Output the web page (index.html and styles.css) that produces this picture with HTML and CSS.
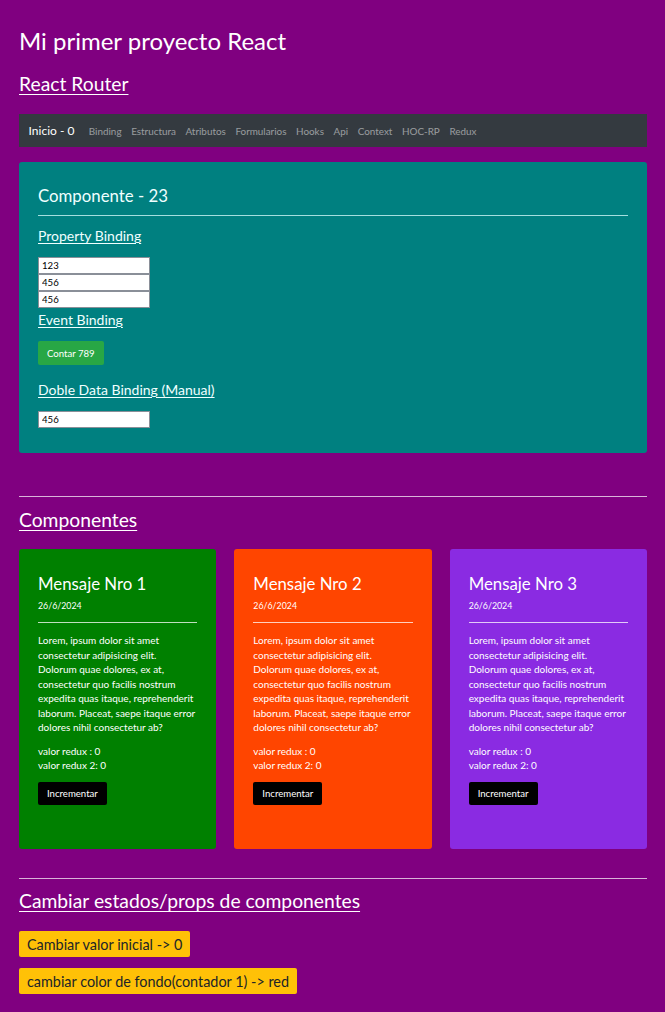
FILE: index.html
```html
<!DOCTYPE html>
<html lang="es">
<head>
<meta charset="utf-8">
<title>Mi primer proyecto React</title>
<link rel="stylesheet" href="styles.css">
</head>
<body>
<div class="page">
  <h1 class="title">Mi primer proyecto React</h1>
  <h2 class="section-link"><a href="#">React Router</a></h2>

  <nav class="navbar">
    <a class="brand" href="#">Inicio - 0</a>
    <a class="nav-link" href="#">Binding</a>
    <a class="nav-link" href="#">Estructura</a>
    <a class="nav-link" href="#">Atributos</a>
    <a class="nav-link" href="#">Formularios</a>
    <a class="nav-link" href="#">Hooks</a>
    <a class="nav-link" href="#">Api</a>
    <a class="nav-link" href="#">Context</a>
    <a class="nav-link" href="#">HOC-RP</a>
    <a class="nav-link" href="#">Redux</a>
  </nav>

  <section class="teal-box">
    <h3 class="box-title">Componente - 23</h3>
    <hr class="box-hr">
    <h4 class="sub-link first"><a href="#">Property Binding</a></h4>
    <div class="inputs">
      <input class="field" type="text" value="123">
      <input class="field" type="text" value="456">
      <input class="field" type="text" value="456">
    </div>
    <h4 class="sub-link event"><a href="#">Event Binding</a></h4>
    <button class="btn-green">Contar 789</button>
    <h4 class="sub-link doble"><a href="#">Doble Data Binding (Manual)</a></h4>
    <input class="field single" type="text" value="456">
  </section>

  <hr class="main-hr first-hr">
  <h2 class="section-link comp"><a href="#">Componentes</a></h2>

  <div class="cards">
    <article class="card green">
      <h3 class="card-title">Mensaje Nro 1</h3>
      <p class="card-date">26/6/2024</p>
      <hr class="card-hr">
      <p class="card-text">Lorem, ipsum dolor sit amet consectetur adipisicing elit. Dolorum quae dolores, ex at, consectetur quo facilis nostrum expedita quas itaque, reprehenderit laborum. Placeat, saepe itaque error dolores nihil consectetur ab?</p>
      <p class="card-redux">valor redux : 0<br>valor redux 2: 0</p>
      <button class="btn-black">Incrementar</button>
    </article>
    <article class="card orange">
      <h3 class="card-title">Mensaje Nro 2</h3>
      <p class="card-date">26/6/2024</p>
      <hr class="card-hr">
      <p class="card-text">Lorem, ipsum dolor sit amet consectetur adipisicing elit. Dolorum quae dolores, ex at, consectetur quo facilis nostrum expedita quas itaque, reprehenderit laborum. Placeat, saepe itaque error dolores nihil consectetur ab?</p>
      <p class="card-redux">valor redux : 0<br>valor redux 2: 0</p>
      <button class="btn-black">Incrementar</button>
    </article>
    <article class="card violet">
      <h3 class="card-title">Mensaje Nro 3</h3>
      <p class="card-date">26/6/2024</p>
      <hr class="card-hr">
      <p class="card-text">Lorem, ipsum dolor sit amet consectetur adipisicing elit. Dolorum quae dolores, ex at, consectetur quo facilis nostrum expedita quas itaque, reprehenderit laborum. Placeat, saepe itaque error dolores nihil consectetur ab?</p>
      <p class="card-redux">valor redux : 0<br>valor redux 2: 0</p>
      <button class="btn-black">Incrementar</button>
    </article>
  </div>

  <hr class="main-hr second-hr">
  <h2 class="section-link change"><a href="#">Cambiar estados/props de componentes</a></h2>
  <div class="yellow-buttons">
    <button class="btn-yellow">Cambiar valor inicial -&gt; 0</button>
    <button class="btn-yellow">cambiar color de fondo(contador 1) -&gt; red</button>
  </div>
</div>
</body>
</html>
```

FILE: styles.css
```css
* { box-sizing: border-box; }

html, body {
  margin: 0;
  background: #800080;
}

body {
  font-family: "Lato", "Open Sans", sans-serif;
  color: #ffffff;
  font-size: 9.6px;
}

.page {
  padding: 0 18px 19px 19px;
}

a { color: #ffffff; }

.title {
  margin: 26px 0 0;
  font-size: 24px;
  line-height: 29px;
  font-weight: 400;
}

.section-link {
  margin: 17px 0 0;
  font-size: 19.3px;
  line-height: 23px;
  font-weight: 400;
}

.section-link a { text-decoration: underline; text-underline-offset: 3px; text-decoration-thickness: 1px; }

.navbar {
  margin-top: 19px;
  height: 33px;
  background: #343a40;
  display: flex;
  align-items: center;
  padding: 0 9.6px;
}

.brand {
  font-size: 12px;
  text-decoration: none;
  color: #fff;
  margin-right: 9.6px;
}

.nav-link {
  font-size: 9.9px;
  color: rgba(255, 255, 255, 0.5);
  text-decoration: none;
  padding: 0 4.8px;
}

.teal-box {
  margin-top: 15px;
  background: #008080;
  border-radius: 3px;
  padding: 24px 19px 25px 19px;
}

.box-title {
  margin: 0;
  font-size: 16.8px;
  line-height: 20px;
  font-weight: 400;
  color: #f0ffff;
}

.box-hr {
  margin: 9px 0 0;
  border: 0;
  border-top: 1px solid rgba(220, 255, 255, 0.75);
}

.sub-link {
  margin: 0;
  font-size: 14px;
  line-height: 17px;
  font-weight: 400;
}

.sub-link a { color: #f0ffff; text-underline-offset: 2px; text-decoration-thickness: 1px; }

.sub-link.first { margin-top: 11px; }
.sub-link.event { margin-top: 3px; }
.sub-link.doble { margin-top: 16px; }

.inputs {
  margin-top: 13px;
  display: flex;
  flex-direction: column;
}

.field {
  display: block;
  flex: none;
  width: 112px;
  height: 17px;
  margin: 0;
  padding: 0 3px;
  border: 1px solid #8a8f98;
  background: #fff;
  font-family: "Lato", sans-serif;
  font-size: 9.6px;
  color: #000;
}

.field.single { margin-top: 13px; }

.btn-green {
  display: block;
  margin-top: 13px;
  height: 24px;
  padding: 0 9px;
  background: #28a745;
  color: #fff;
  border: 0;
  border-radius: 2px;
  font-family: "Lato", sans-serif;
  font-size: 9.6px;
}

.main-hr {
  margin: 0;
  border: 0;
  border-top: 1px solid rgba(255, 255, 255, 0.7);
}

.first-hr { margin-top: 43px; }
.second-hr { margin-top: 29px; }

.section-link.comp { margin-top: 11px; }
.section-link.change { margin-top: 10px; }

.cards {
  margin-top: 18px;
  display: grid;
  grid-template-columns: repeat(3, 1fr);
  gap: 18px;
}

.card {
  border-radius: 3px;
  padding: 25px 19px 44px;
  font-size: 10px;
}

.card.green { background: #008000; }
.card.orange { background: #ff4500; }
.card.violet { background: #8a2be2; }

.card-title {
  margin: 0;
  font-size: 16.8px;
  line-height: 20px;
  font-weight: 400;
}

.card-date {
  margin: 5px 0 0;
  line-height: 14.4px;
  font-size: 8.8px;
}

.card-hr {
  margin: 9px 0 0;
  border: 0;
  border-top: 1px solid rgba(255, 255, 255, 0.75);
}

.card-text {
  margin: 10px 0 0;
  line-height: 14.5px;
}

.card-redux {
  margin: 9px 0 0;
  line-height: 14.4px;
}

.btn-black {
  display: block;
  margin-top: 9.6px;
  height: 23px;
  padding: 0 9px;
  background: #000;
  color: #fff;
  border: 0;
  border-radius: 2px;
  font-family: "Lato", sans-serif;
  font-size: 9.6px;
}

.yellow-buttons {
  margin-top: 19px;
  display: flex;
  flex-direction: column;
  align-items: flex-start;
  gap: 11px;
}

.btn-yellow {
  height: 26px;
  padding: 0 8px;
  background: #ffc107;
  color: #212529;
  border: 0;
  border-radius: 2px;
  font-family: "Lato", sans-serif;
  font-size: 14.4px;
}
```
